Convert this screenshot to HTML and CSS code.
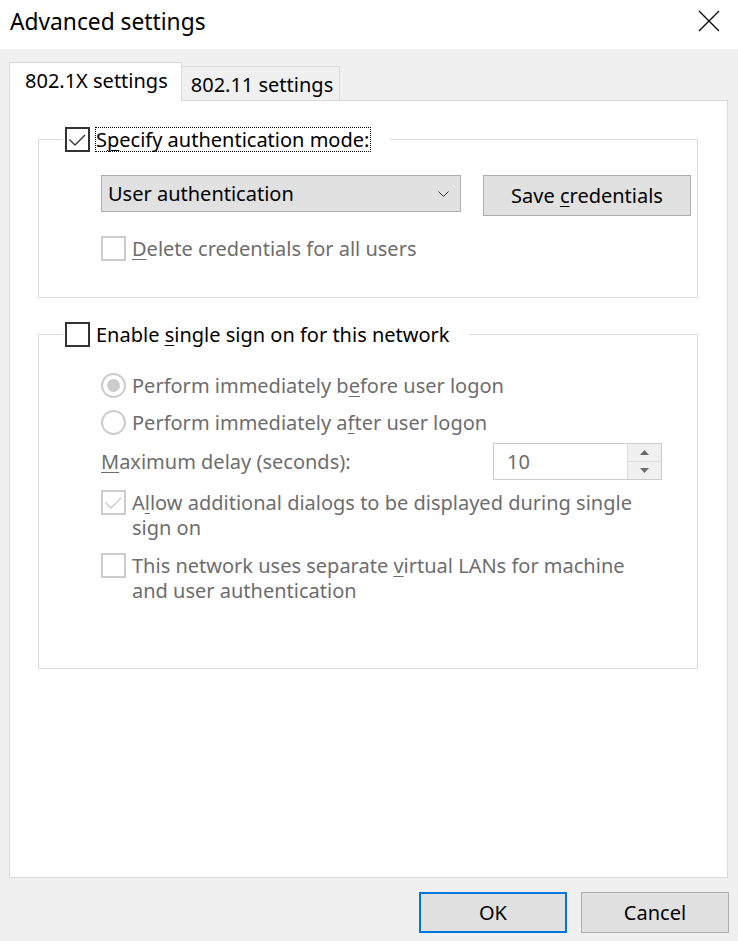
FILE: index.html
```html
<!DOCTYPE html>
<html lang="en">
<head>
<meta charset="utf-8">
<title>Advanced settings</title>
<link rel="stylesheet" href="styles.css">
</head>
<body>
<div class="titlebar">
  <h1 class="title">Advanced settings</h1>
  <svg class="close" viewBox="0 0 22 22" width="22" height="22"><path d="M1 1 L21 21 M21 1 L1 21" stroke="#000" stroke-width="1.3" fill="none"/></svg>
</div>
<div class="tabs">
  <div class="tab active">802.1X settings</div>
  <div class="tab inactive">802.11 settings</div>
</div>
<div class="panel">
  <fieldset class="group g1">
    <legend><span class="legend-in">
      <span class="cb"><svg viewBox="0 0 21 21" width="21" height="21"><path d="M2.5 10.5 L8 16 L18 6" stroke="#333" stroke-width="1.3" fill="none"/></svg></span>
      <span class="focus">S<u>p</u>ecify authentication mode:</span>
    </span></legend>
    <div class="body">
      <div class="row">
        <div class="select"><span>User authentication</span><svg class="chev" viewBox="0 0 11 6" width="11" height="6"><path d="M0.5 0.5 L5.5 5.5 L10.5 0.5" stroke="#333" stroke-width="1" fill="none"/></svg></div>
        <button class="btn save"><span>Save <u>c</u>redentials</span></button>
      </div>
      <div class="check-row disabled del">
        <span class="cb"></span>
        <span class="lbl"><u>D</u>elete credentials for all users</span>
      </div>
    </div>
  </fieldset>
  <fieldset class="group g2">
    <legend><span class="legend-in">
      <span class="cb"></span>
      <span class="lbl">Enable <u>s</u>ingle sign on for this network</span>
    </span></legend>
    <div class="body">
      <div class="check-row disabled">
        <span class="radio"><span class="dot"></span></span>
        <span class="lbl">Perform immediately b<u>e</u>fore user logon</span>
      </div>
      <div class="check-row disabled r2">
        <span class="radio"></span>
        <span class="lbl">Perform immediately a<u>f</u>ter user logon</span>
      </div>
      <div class="delay-row disabled">
        <span class="lbl"><u>M</u>aximum delay (seconds):</span>
        <div class="spin">
          <span class="spin-val">10</span>
          <span class="spin-btns">
            <span><svg viewBox="0 0 9 5" width="9" height="5"><path d="M0 5 L4.5 0 L9 5 Z" fill="#6a6a6a"/></svg></span>
            <span><svg viewBox="0 0 9 5" width="9" height="5"><path d="M0 0 L4.5 5 L9 0 Z" fill="#6a6a6a"/></svg></span>
          </span>
        </div>
      </div>
      <div class="check-row disabled allow">
        <span class="cb"><svg viewBox="0 0 21 21" width="21" height="21"><path d="M2.5 10.5 L8 16 L18 6" stroke="#c8c8c8" stroke-width="1.3" fill="none"/></svg></span>
        <span class="lbl">A<u>l</u>low additional dialogs to be displayed during single<br>sign on</span>
      </div>
      <div class="check-row disabled vlan">
        <span class="cb"></span>
        <span class="lbl">This network uses separate <u>v</u>irtual LANs for machine<br>and user authentication</span>
      </div>
    </div>
  </fieldset>
</div>
<div class="footer">
  <button class="btn default"><span>OK</span></button>
  <button class="btn"><span>Cancel</span></button>
</div>
</body>
</html>
```
FILE: styles.css
```css
* { box-sizing: border-box; }
html, body { margin: 0; padding: 0; }
body {
  width: 738px;
  height: 941px;
  overflow: hidden;
  background: #f0f0f0;
  font-family: "Noto Sans", "Segoe UI", sans-serif;
  font-size: 20px;
  line-height: 25px;
  color: #000;
}
u { text-decoration-thickness: 1px; text-underline-offset: 3px; }

.titlebar {
  height: 49px;
  background: #fff;
  display: flex;
  align-items: flex-start;
}
.title {
  margin: 0;
  padding: 6px 0 0 10px;
  font-size: 22.75px;
  line-height: 31px;
  font-weight: normal;
}
.close {
  display: block;
  margin: 10px 18px 0 auto;
}

.tabs {
  display: flex;
  align-items: flex-start;
  margin: 13px 0 -1px 9px;
  position: relative;
  z-index: 1;
}
.tab {
  border: 1px solid #d9d9d9;
  border-bottom: none;
  padding-top: 5px;
  white-space: nowrap;
}
.tab.active {
  height: 39px;
  background: #fff;
  padding-left: 15px;
  padding-right: 13px;
}
.tab.inactive {
  height: 34px;
  margin-top: 4px;
  background: #f0f0f0;
  border-left: none;
  padding-left: 9px;
  padding-right: 6px;
}

.panel {
  margin: 0 10px 0 9px;
  height: 778px;
  background: #fff;
  border: 1px solid #d9d9d9;
  padding: 26px 29px 0 28px;
}

.group {
  margin: 0;
  padding: 0;
  min-width: 0;
  border: 1px solid #dcdcdc;
}
.group + .group { margin-top: 24px; }
.group legend {
  margin-left: 24px;
  padding: 0 19px 0 2px;
}
.legend-in {
  display: flex;
  align-items: flex-start;
  gap: 6px;
}
.focus {
  display: block;
  height: 25px;
  line-height: 23px;
  border: 1px dotted #000;
  margin-left: -1px;
  padding: 0 1px 0 0;
}

.g1 .body { padding: 23px 0 36px 62px; }
.g2 .body { padding: 26px 35px 65px 62px; }

.row {
  display: flex;
  align-items: flex-start;
  gap: 22px;
}
.select {
  width: 360px;
  height: 37px;
  background: #e1e1e1;
  border: 1px solid #adadad;
  display: flex;
  align-items: center;
  padding: 0 11px 0 6px;
}
.chev { margin-left: auto; display: block; }

.btn {
  height: 41px;
  background: #e1e1e1;
  border: 1px solid #adadad;
  font: inherit;
  color: #000;
  padding: 0;
  display: flex;
  align-items: center;
  justify-content: center;
}
.btn span { white-space: pre; }
.save { width: 208px; }
.btn.default { border: 2px solid #0078d7; }

.check-row {
  display: flex;
  align-items: flex-start;
  gap: 6px;
}
.del { margin-top: 20px; }
.r2 { margin-top: 12px; }
.allow { margin-top: 10px; }
.vlan { margin-top: 13px; }

.cb {
  flex: none;
  width: 25px;
  height: 25px;
  border: 2px solid #333;
  background: #fff;
}
.cb svg { display: block; }
.disabled { color: #6d6d6d; }
.disabled .cb { border-color: #cccccc; }

.radio {
  flex: none;
  width: 25px;
  height: 25px;
  border: 2px solid #cccccc;
  border-radius: 50%;
  display: flex;
  align-items: center;
  justify-content: center;
}
.dot {
  width: 13px;
  height: 13px;
  border-radius: 50%;
  background: #cccccc;
}

.delay-row {
  margin-top: 8px;
  display: flex;
  align-items: center;
}
.spin {
  margin-left: auto;
  width: 169px;
  height: 37px;
  border: 1px solid #cccccc;
  background: #fff;
  display: flex;
}
.spin-val {
  flex: 1;
  padding-left: 13px;
  line-height: 35px;
  color: #6d6d6d;
}
.spin-btns {
  width: 34px;
  display: flex;
  flex-direction: column;
  border-left: 1px solid #dcdcdc;
}
.spin-btns span {
  flex: 1;
  background: #f0f0f0;
  display: flex;
  align-items: center;
  justify-content: center;
}
.spin-btns span + span { border-top: 1px solid #dcdcdc; }
.spin-btns svg { display: block; }

.footer {
  display: flex;
  justify-content: flex-end;
  gap: 14px;
  padding: 14px 9px 0 0;
}
.footer .btn { width: 148px; }
```
